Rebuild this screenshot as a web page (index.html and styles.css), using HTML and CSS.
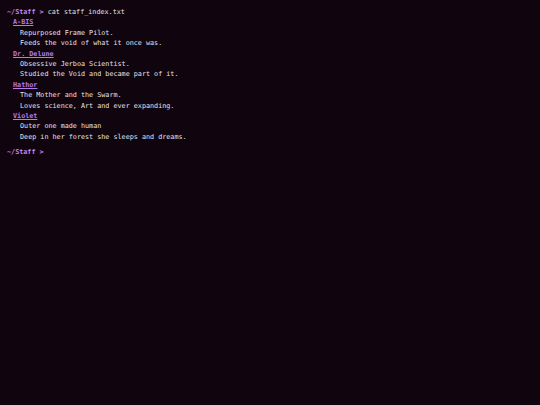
FILE: index.html
```html
<!DOCTYPE html>
<html>
<head>
<meta charset="utf-8">
<link rel="stylesheet" href="styles.css">
</head>
<body>
<div class="term">
  <div class="line"><span class="prompt">~/Staff &gt;</span> cat staff_index.txt</div>
  <div class="entry">
    <div class="name">A-BIS</div>
    <div class="desc">Repurposed Frame Pilot.</div>
    <div class="desc">Feeds the void of what it once was.</div>
  </div>
  <div class="entry">
    <div class="name">Dr. Delune</div>
    <div class="desc">Obsessive Jerboa Scientist.</div>
    <div class="desc">Studied the Void and became part of it.</div>
  </div>
  <div class="entry">
    <div class="name">Hathor</div>
    <div class="desc">The Mother and the Swarm.</div>
    <div class="desc">Loves science, Art and ever expanding.</div>
  </div>
  <div class="entry">
    <div class="name">Violet</div>
    <div class="desc">Outer one made human</div>
    <div class="desc">Deep in her forest she sleeps and dreams.</div>
  </div>
  <div class="line final"><span class="prompt">~/Staff &gt;</span></div>
</div>
</body>
</html>
```
FILE: styles.css
```css
html, body {
  margin: 0;
  padding: 0;
  background: #10040f;
  height: 100%;
}
.term {
  padding: 7px 7px;
  font-family: "DejaVu Sans Mono", monospace;
  font-size: 6.75px;
  line-height: 10.4px;
  color: #e6e2e6;
}
.line, .name, .desc {
  white-space: pre;
}
.prompt {
  color: #c688f2;
  font-weight: bold;
}
.name {
  padding-left: 6px;
  color: #b77ae8;
  font-weight: bold;
  text-decoration: underline;
}
.desc {
  padding-left: 13px;
}
.final {
  margin-top: 5px;
}
```
